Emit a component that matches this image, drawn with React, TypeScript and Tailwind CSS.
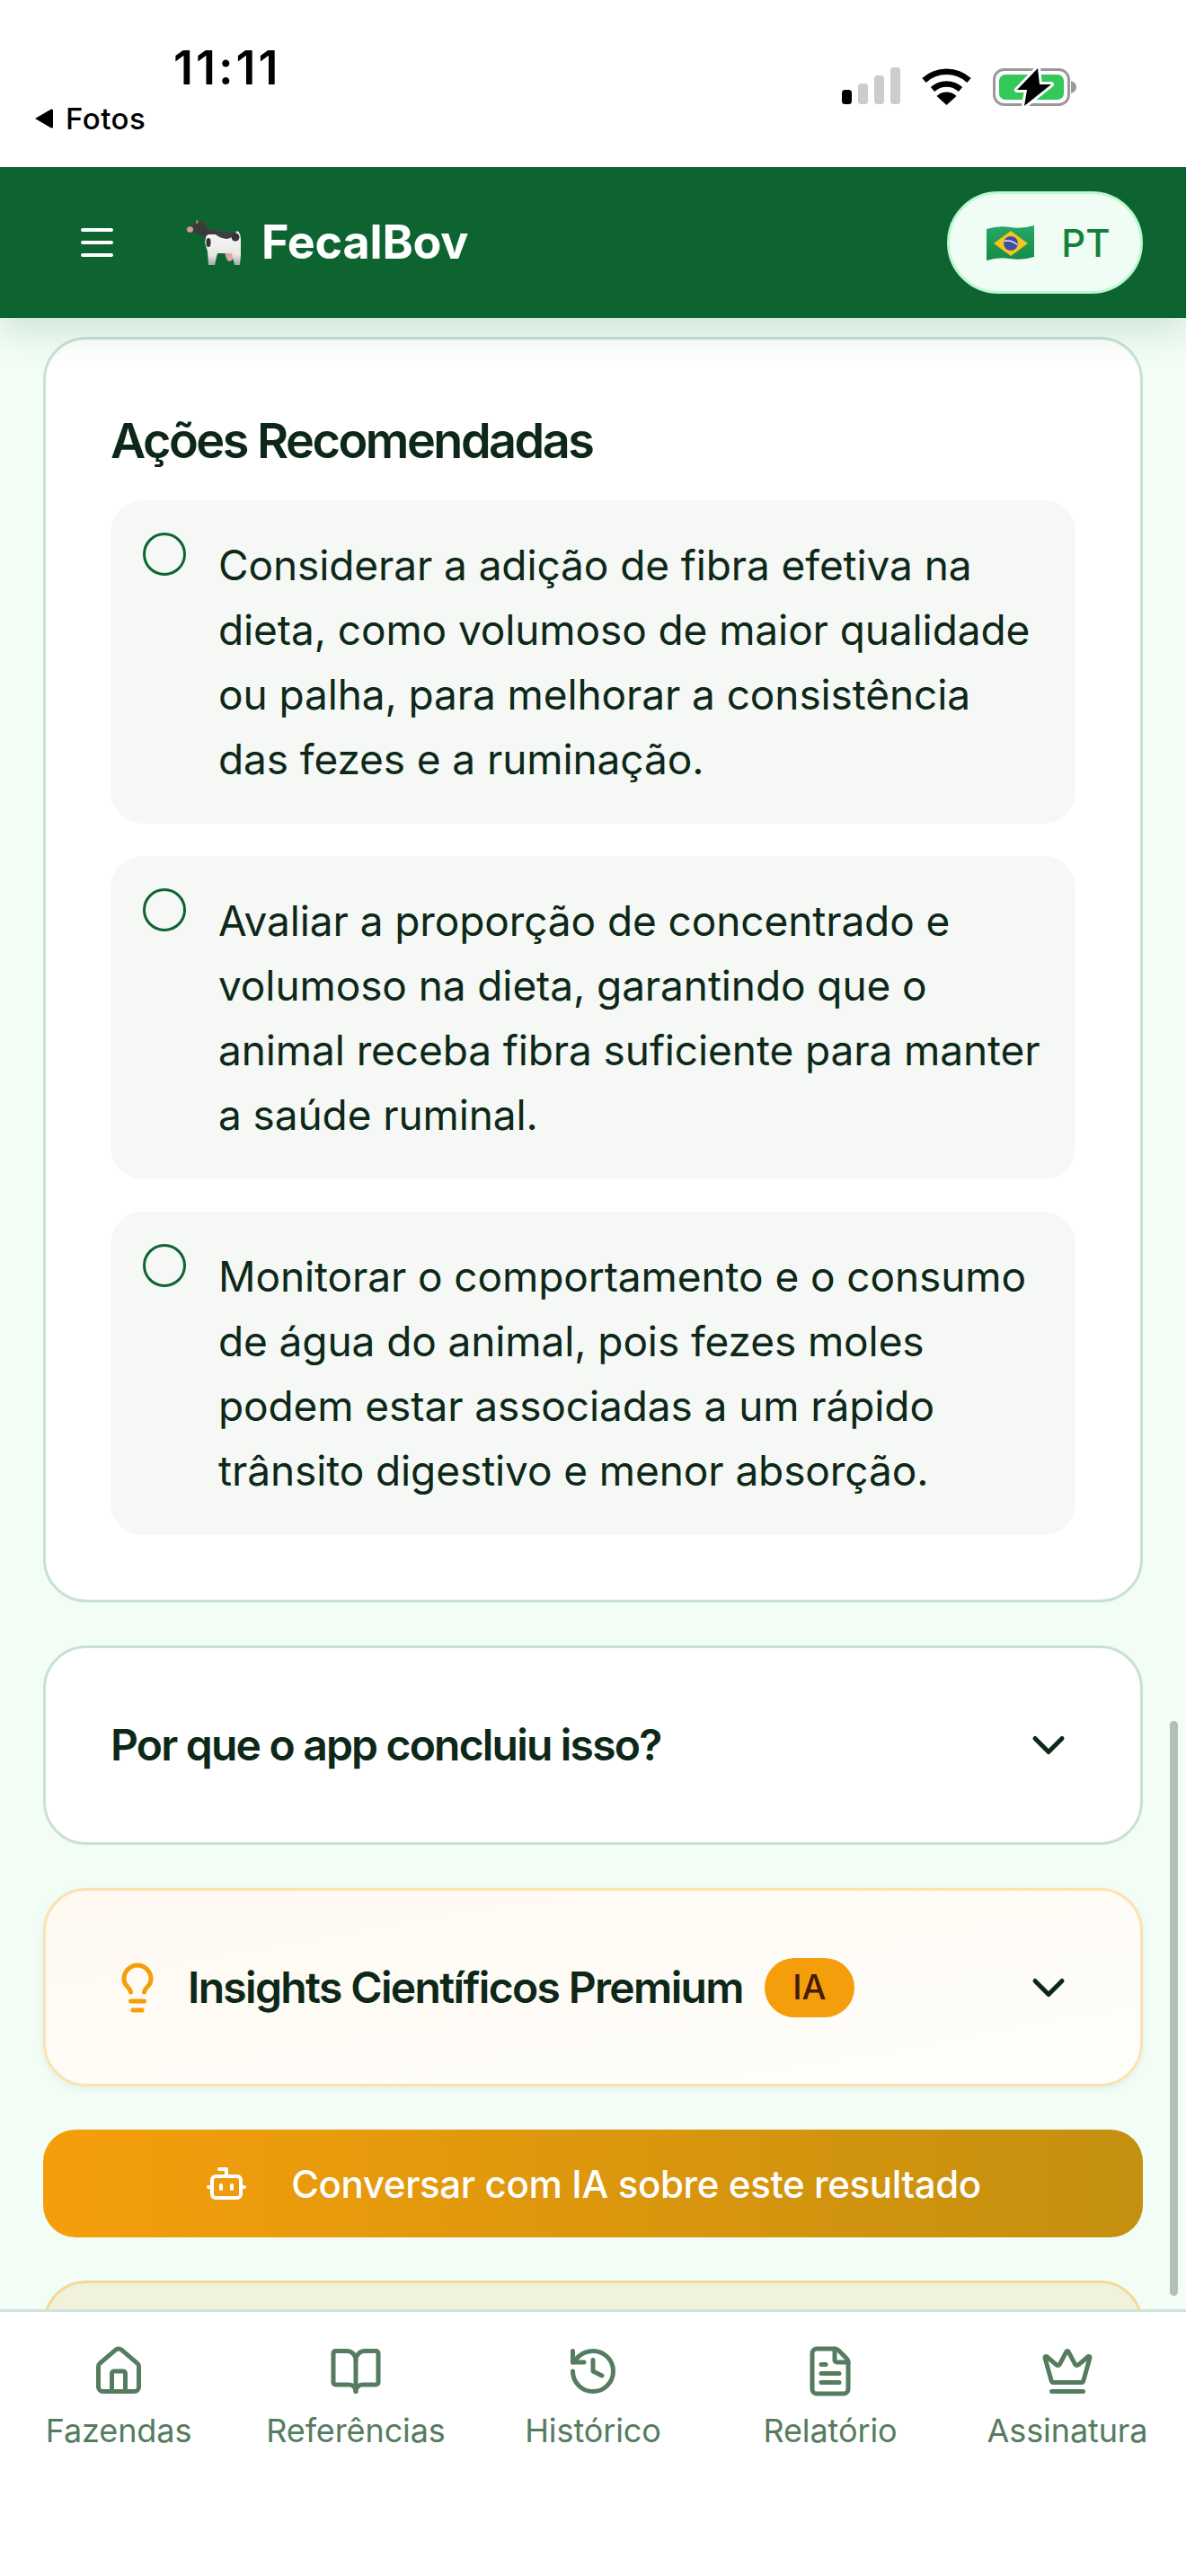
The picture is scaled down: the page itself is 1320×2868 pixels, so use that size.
import { Menu, ChevronDown, Lightbulb, Bot, House, BookOpen, History, FileText, Crown } from "lucide-react";

const actions = [
  ["Considerar a adição de fibra efetiva na", "dieta, como volumoso de maior qualidade", "ou palha, para melhorar a consistência", "das fezes e a ruminação."],
  ["Avaliar a proporção de concentrado e", "volumoso na dieta, garantindo que o", "animal receba fibra suficiente para manter", "a saúde ruminal."],
  ["Monitorar o comportamento e o consumo", "de água do animal, pois fezes moles", "podem estar associadas a um rápido", "trânsito digestivo e menor absorção."],
];

const tabs = [
  { label: "Fazendas", Icon: House },
  { label: "Referências", Icon: BookOpen },
  { label: "Histórico", Icon: History },
  { label: "Relatório", Icon: FileText },
  { label: "Assinatura", Icon: Crown },
];

function Signal() {
  return (
    <svg width="65" height="41" viewBox="0 0 65 41" className="block">
      <rect x="0" y="25" width="11" height="16" rx="3.5" fill="#000" />
      <rect x="18" y="18" width="11" height="23" rx="3.5" fill="#ccc" />
      <rect x="36" y="9" width="11" height="32" rx="3.5" fill="#ccc" />
      <rect x="54" y="0" width="11" height="41" rx="3.5" fill="#ccc" />
    </svg>
  );
}

function Wifi() {
  return (
    <svg width="57" height="42" viewBox="0 0 57 42" className="block">
      <path d="M3.5 14.5 A37 37 0 0 1 53.5 14.5" fill="none" stroke="#000" strokeWidth="6.5" />
      <path d="M13 24.5 A23 23 0 0 1 44 24.5" fill="none" stroke="#000" strokeWidth="6.5" />
      <path d="M28.5 42 L17.5 32 A16 16 0 0 1 39.5 32 Z" fill="#000" />
    </svg>
  );
}

function Battery() {
  return (
    <svg width="93" height="44" viewBox="0 0 93 44" className="block">
      <rect x="1.5" y="2.5" width="83" height="39" rx="11" fill="none" stroke="#999" strokeWidth="3" />
      <rect x="7" y="8" width="72" height="28" rx="7" fill="#34C759" />
      <path d="M87 15 Q93 17 93 22 Q93 27 87 29 Z" fill="#999" />
      <path d="M50 1 L27 25 L38 25 L35 43 L65 19 L52 19 Z" fill="#000" stroke="#fff" strokeWidth="6" strokeLinejoin="round" paintOrder="stroke" />
    </svg>
  );
}

function Cow() {
  return (
    <svg width="62" height="52" viewBox="0 0 62 52" className="block">
      <defs>
        <linearGradient id="cowBody" x1="0" y1="0" x2="0" y2="1">
          <stop offset="0" stopColor="#f8f8f6" />
          <stop offset="0.7" stopColor="#e8e8e5" />
          <stop offset="1" stopColor="#a9a9a5" />
        </linearGradient>
      </defs>
      <path d="M42 34 L54 34 Q54 46 47 47 Q43 46 42 34 Z" fill="#e0a79e" />
      <path d="M22 16 L30 13 Q42 17 56 13 Q60 15 60 24 L60 40 L59 51 L53 51 L50 38 L34 38 L31 51 L24 51 L23 36 L20 26 Z" fill="url(#cowBody)" />
      <path d="M17 9 L30 12 Q42 16 56 13 Q50 22 44 22 Q36 21 32 17 L24 17 Z" fill="#3f3f42" />
      <circle cx="54" cy="20" r="4.5" fill="#333" />
      <ellipse cx="24" cy="26" rx="2.6" ry="5" fill="#333" />
      <path d="M2 9 L10 5 L15 3 L22 8 L25 16 L20 20 L10 15 L4 15 Z" fill="#3a3a3c" />
      <ellipse cx="3.5" cy="11.5" rx="3.5" ry="3.2" fill="#d99a92" />
      <path d="M10 5 L11 0 L13 4 Z" fill="#b59a4a" />
      <path d="M15 3 L20 1 L21 6 Z" fill="#5b3b3b" />
    </svg>
  );
}

function Flag() {
  return (
    <svg width="53" height="39" viewBox="0 0 53 39" className="block">
      <defs>
        <linearGradient id="flagGreen" x1="0" y1="0" x2="0" y2="1">
          <stop offset="0" stopColor="#27A866" />
          <stop offset="1" stopColor="#158A48" />
        </linearGradient>
      </defs>
      <path d="M0 4 Q13 0 26 2 Q40 4 53 0 L53 35 Q40 39 26 37 Q13 35 0 39 Z" fill="url(#flagGreen)" />
      <path d="M8 20 L27 6 L46 20 L27 34 Z" fill="#F8C51C" />
      <circle cx="27" cy="20" r="8" fill="#3F4FA5" />
      <path d="M19.5 17.5 Q27 15.5 34.5 21.5" fill="none" stroke="#E8EEF4" strokeWidth="1.6" />
    </svg>
  );
}

export default function App() {
  return (
    <div className="flex h-[2868px] w-[1320px] flex-col overflow-hidden bg-white font-['Inter',sans-serif] text-[#0D2818]">
      <div className="relative z-20 flex h-[186px] shrink-0 justify-between bg-white text-black">
        <div className="pl-[38px] pt-[46px]">
          <div className="pl-[155px] text-[52px] leading-[60px] font-semibold tracking-[3px]">11:11</div>
          <div className="mt-[6px] flex items-center gap-[13px] text-[33px] leading-[40px] font-medium tracking-[0.5px]">
            <svg width="22" height="24" viewBox="0 0 22 24" className="block"><path d="M1 12 L19 1.5 Q21 1 21 3 L21 21 Q21 23 19 22.5 Z" fill="#000" /></svg>
            <span>Fotos</span>
          </div>
        </div>
        <div className="flex items-start gap-[23px] pr-[122px] pt-[75px]">
          <Signal />
          <Wifi />
          <Battery />
        </div>
      </div>

      <header className="relative z-10 flex h-[168px] shrink-0 items-center bg-[#0E6431] pl-[84px] pr-[48px] shadow-[0_12px_40px_rgba(14,100,49,0.18)]">
        <Menu size={48} strokeWidth={2} className="text-white" />
        <div className="ml-[76px] mb-[1px]"><Cow /></div>
        <div className="ml-[21px] text-[52px] leading-[60px] font-bold tracking-[-0.2px] text-white">FecalBov</div>
        <button className="ml-auto flex h-[114px] w-[218px] items-center justify-center gap-[30px] rounded-[57px] border-[3px] border-[#BBF7D0] bg-[#F0FDF4] pl-[8px] text-[42px] font-medium text-[#15803D]">
          <Flag />
          <span>PT</span>
        </button>
      </header>

      <main className="relative flex min-h-0 flex-1 flex-col gap-[48px] overflow-hidden bg-[#F2FDF6] px-[48px] pt-[21px]">
        <section className="shrink-0 rounded-[48px] border-[3px] border-[#C7E2D2] bg-white p-[72px]">
          <h2 className="mb-[26px] text-[54px] leading-[81px] font-semibold tracking-[-2.5px]">Ações Recomendadas</h2>
          <div className="flex flex-col gap-[36px]">
            {actions.map((lines) => (
              <div key={lines[0]} className="flex h-[360px] gap-[36px] rounded-[36px] bg-[#F5F8F5] px-[36px] pt-[36px]">
                <div className="h-[48px] w-[48px] shrink-0 rounded-full border-[3px] border-[#0E6431]" />
                <p className="text-[46px] leading-[72px] tracking-[-0.1px] whitespace-nowrap">
                  {lines.map((l) => (<span key={l} className="block">{l}</span>))}
                </p>
              </div>
            ))}
          </div>
        </section>

        <section className="flex h-[222px] shrink-0 items-center justify-between rounded-[48px] border-[3px] border-[#C7E2D2] bg-white pl-[72px] pr-[72px]">
          <h3 className="text-[48px] font-semibold tracking-[-1.8px]">Por que o app concluiu isso?</h3>
          <ChevronDown size={60} strokeWidth={2} />
        </section>

        <section className="flex h-[221px] shrink-0 items-center rounded-[48px] border-[3px] border-[#FCE2B0] bg-gradient-to-br from-[#FFF9F2] to-[#FEFEFA] pl-[72px] pr-[72px] shadow-[0_3px_9px_rgba(14,100,49,0.08)]">
          <Lightbulb size={60} strokeWidth={2} className="text-[#F59E0B]" />
          <h3 className="ml-[26px] text-[48px] font-semibold tracking-[-1.65px]">Insights Científicos Premium</h3>
          <span className="ml-[24px] flex h-[66px] w-[100px] items-center justify-center rounded-[33px] bg-[#F59E0B] text-[38px] font-medium text-[#451A03]">IA</span>
          <ChevronDown size={60} strokeWidth={2} className="ml-auto" />
        </section>

        <button className="flex h-[120px] shrink-0 items-center justify-center gap-[48px] rounded-[36px] bg-gradient-to-r from-[#F59E0B] to-[#C4900F] text-[42px] font-medium tracking-[-0.35px] text-white">
          <Bot size={48} strokeWidth={2} />
          <span>Conversar com IA sobre este resultado</span>
        </button>

        <section className="h-[200px] shrink-0 rounded-[48px] border-[3px] border-[#F4D995] bg-[#F0F2DC]" />

        <div className="absolute right-[9px] bottom-[15px] h-[640px] w-[9px] rounded-full bg-[#B2C0B6]" />
      </main>

      <nav className="relative z-10 grid h-[297px] shrink-0 grid-cols-5 border-t-[3px] border-[#CDE5D8] bg-white pt-[36px] text-[#557C5F]">
        {tabs.map(({ label, Icon }) => (
          <div key={label} className="flex flex-col items-center">
            <Icon size={60} strokeWidth={2} />
            <span className="mt-[12px] text-[36px] leading-[48px] tracking-[-0.1px]">{label}</span>
          </div>
        ))}
      </nav>
    </div>
  );
}
